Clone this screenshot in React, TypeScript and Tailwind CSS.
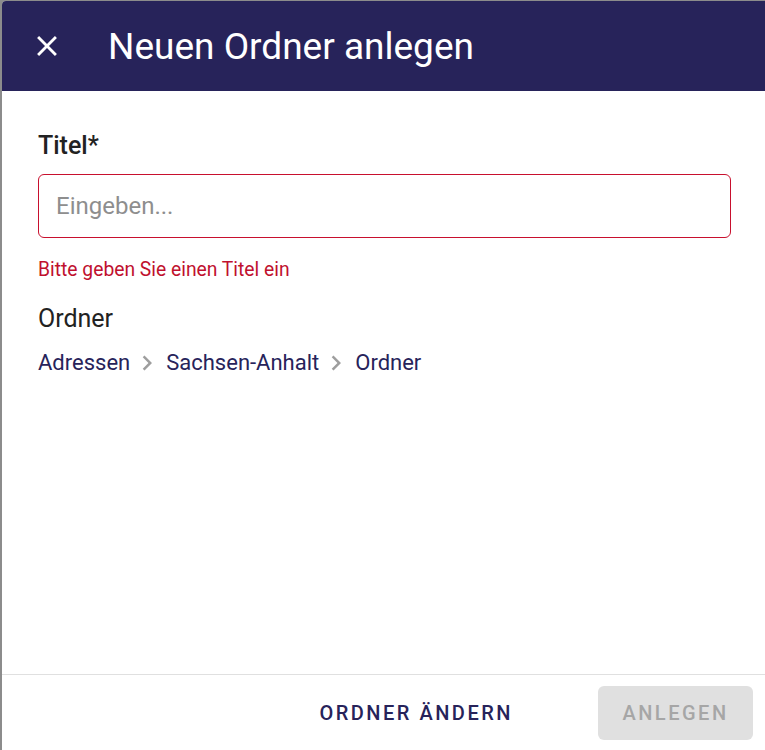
const font = { fontFamily: 'Roboto, "Liberation Sans", sans-serif' };

function CloseIcon() {
  return (
    <svg viewBox="0 0 24 24" className="w-[34px] h-[34px]" fill="currentColor">
      <path d="M19 6.41 17.59 5 12 10.59 6.41 5 5 6.41 10.59 12 5 17.59 6.41 19 12 13.41 17.59 19 19 17.59 13.41 12z" />
    </svg>
  );
}

function Chevron() {
  return (
    <svg viewBox="0 0 24 24" className="w-[30px] h-[30px] text-[#9e9e9e] ml-[2px] mr-[4px] shrink-0" fill="currentColor">
      <path d="M10 6 8.59 7.41 13.17 12l-4.58 4.59L10 18l6-6z" />
    </svg>
  );
}

export default function App() {
  return (
    <div className="w-[765px] h-[750px] bg-[#8c8c8c] pl-[2px] pt-[1px] overflow-hidden" style={font}>
      <div className="w-[763px] h-[749px] bg-white rounded-tl-[4px] overflow-hidden flex flex-col">
        {/* Header */}
        <div className="h-[90px] bg-[#27235a] flex items-center shrink-0">
          <button className="ml-[28px] w-[34px] h-[34px] flex items-center justify-center text-white">
            <CloseIcon />
          </button>
          <h1 className="ml-[44px] text-[37px] text-white font-normal leading-none">Neuen Ordner anlegen</h1>
        </div>

        {/* Body */}
        <div className="flex-1 px-[36px] pt-[41px]">
          <label className="block text-[25px] font-medium text-[#222222] leading-[28px]">Titel*</label>
          <input
            placeholder="Eingeben..."
            className="mt-[14px] w-[693px] h-[64px] border border-[#c8102e] rounded-[6px] px-[17px] text-[24px] text-[#222] placeholder:text-[#8e8e8e] outline-none"
          />
          <p className="mt-[20px] text-[19.3px] text-[#c0102e] leading-[24px]">Bitte geben Sie einen Titel ein</p>
          <p className="mt-[23px] text-[25px] text-[#222222] leading-[28px]">Ordner</p>
          <div className="mt-[15px] flex items-center text-[22px] text-[#27235a] leading-[28px]">
            <span>Adressen</span>
            <Chevron />
            <span>Sachsen-Anhalt</span>
            <Chevron />
            <span>Ordner</span>
          </div>
        </div>

        {/* Footer */}
        <div className="h-[76px] border-t border-[#e0e0e0] flex items-center justify-end pr-[12px] shrink-0">
          <button className="text-[20px] font-medium tracking-[0.125em] text-[#27235a] px-[8px] mr-[77px]">ORDNER ÄNDERN</button>
          <button className="w-[155px] h-[54px] rounded-[6px] bg-[#e0e0e0] text-[20px] font-medium tracking-[0.125em] text-[#a6a6a6]">ANLEGEN</button>
        </div>
      </div>
    </div>
  );
}
